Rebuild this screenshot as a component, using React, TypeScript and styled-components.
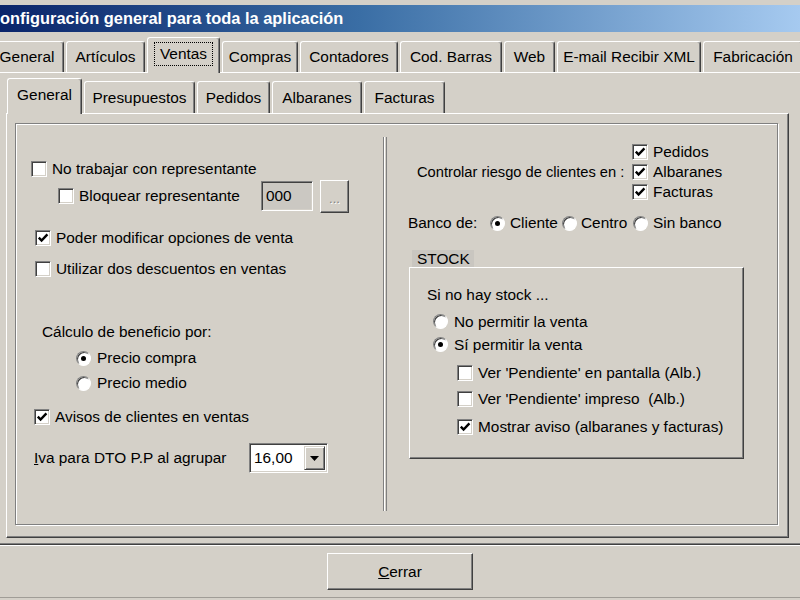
import React from 'react';
import styled, { createGlobalStyle } from 'styled-components';

const Global = createGlobalStyle`
  html, body { margin: 0; padding: 0; background: #d4d0c8; }
  body {
    font-family: "Liberation Sans", Arial, sans-serif;
    font-size: 15.4px;
    color: #000;
  }
  #root { width: 800px; height: 600px; overflow: hidden; }
`;

const Win = styled.div`
  width: 800px;
  height: 600px;
  overflow: hidden;
  background: #d4d0c8;
  display: flex;
  flex-direction: column;
  box-sizing: border-box;
  padding-top: 5px;
`;

const TitleBar = styled.div`
  flex: none;
  height: 27px;
  background: linear-gradient(to right, #0a246a 0%, #3a6ea5 45%, #a6caf0 100%);
  color: #fff;
  font-weight: bold;
  font-size: 16.4px;
  display: flex;
  align-items: center;
  white-space: nowrap;
`;

const TabStrip = styled.div<{ $h: number; $ml: number }>`
  flex: none;
  display: flex;
  align-items: flex-end;
  gap: 2px;
  height: ${(p) => p.$h}px;
  margin-left: ${(p) => p.$ml}px;
  position: relative;
  z-index: 1;
`;

const Tab = styled.div<{ $w: number; $h: number; $active?: boolean }>`
  flex: none;
  box-sizing: border-box;
  width: ${(p) => p.$w}px;
  height: ${(p) => (p.$active ? p.$h + 1 : p.$h)}px;
  margin-bottom: ${(p) => (p.$active ? -1 : 0)}px;
  padding-bottom: ${(p) => (p.$active ? 3 : 0)}px;
  display: flex;
  align-items: center;
  justify-content: center;
  white-space: nowrap;
  background: #d4d0c8;
  border-top: 1px solid #fff;
  border-left: 1px solid #fff;
  border-right: 1px solid #404040;
  box-shadow: inset -1px 0 #808080;
  border-radius: 3px 3px 0 0;
`;

const Focus = styled.span`
  border: 1px dotted #000;
  padding: 1px 5px;
  line-height: 20px;
`;

const MainPanel = styled.div`
  flex: none;
  box-sizing: border-box;
  height: 473px;
  border-top: 1px solid #fff;
  border-bottom: 1px solid #404040;
  box-shadow: inset 0 -1px #808080;
  padding: 5px 11px 0 6px;
  display: flex;
  flex-direction: column;
`;

const SubPanel = styled.div`
  flex: none;
  box-sizing: border-box;
  height: 425px;
  border: 1px solid;
  border-color: #fff #404040 #404040 #fff;
  box-shadow: inset -1px -1px #808080;
  padding: 9px 10px 12px 8px;
  display: flex;
`;

const GroupBox = styled.div`
  flex: 1;
  box-sizing: border-box;
  border: 1px solid #808080;
  box-shadow: inset 1px 1px #fff, 1px 1px #fff;
  display: grid;
  grid-template-columns: 367px 4px 1fr;
`;

const VDivider = styled.div`
  margin: 13px 0;
  box-sizing: border-box;
  border-left: 1px solid #808080;
  border-right: 1px solid #808080;
  background: linear-gradient(to right, #fff 0 1px, #d4d0c8 1px);
`;

const Col = styled.div<{ $pt: number }>`
  display: flex;
  flex-direction: column;
  padding-top: ${(p) => p.$pt}px;
`;

const Row = styled.div<{ $h: number; $mt?: number; $ml?: number }>`
  flex: none;
  display: flex;
  align-items: center;
  height: ${(p) => p.$h}px;
  margin-top: ${(p) => p.$mt ?? 0}px;
  margin-left: ${(p) => p.$ml ?? 0}px;
  white-space: nowrap;
`;

const Item = styled.div<{ $w?: number; $gap?: number }>`
  flex: none;
  display: flex;
  align-items: center;
  gap: ${(p) => p.$gap ?? 5}px;
  width: ${(p) => (p.$w ? `${p.$w}px` : 'auto')};
  white-space: nowrap;
`;

const Text = styled.span<{ $w?: number; $fs?: number }>`
  flex: none;
  width: ${(p) => (p.$w ? `${p.$w}px` : 'auto')};
  font-size: ${(p) => (p.$fs ? `${p.$fs}px` : 'inherit')};
  white-space: nowrap;
`;

const Box = styled.span`
  flex: none;
  box-sizing: border-box;
  width: 16px;
  height: 16px;
  background: #fff;
  border: 1px solid;
  border-color: #808080 #fff #fff #808080;
  box-shadow: inset 1px 1px #404040, inset -1px -1px #d4d0c8;
  display: flex;
  align-items: center;
  justify-content: center;
`;

const RadioCircle = styled.span`
  flex: none;
  box-sizing: border-box;
  width: 15px;
  height: 15px;
  border-radius: 50%;
  background: #fff;
  border: 1px solid;
  border-color: #808080 #fff #fff #808080;
  box-shadow: inset 1px 1px #404040;
  display: flex;
  align-items: center;
  justify-content: center;
`;

const Dot = styled.span`
  width: 5px;
  height: 5px;
  border-radius: 50%;
  background: #000;
`;

const Sunken = styled.div<{ $w: number; $h: number; $bg: string }>`
  flex: none;
  box-sizing: border-box;
  width: ${(p) => p.$w}px;
  height: ${(p) => p.$h}px;
  background: ${(p) => p.$bg};
  border: 1px solid;
  border-color: #808080 #fff #fff #808080;
  box-shadow: inset 1px 1px #404040, inset -1px -1px #d4d0c8;
  display: flex;
  align-items: center;
  padding-left: 4px;
`;

const Raised = styled.div<{ $w: number; $h: number; $ml?: number }>`
  flex: none;
  box-sizing: border-box;
  width: ${(p) => p.$w}px;
  height: ${(p) => p.$h}px;
  margin-left: ${(p) => p.$ml ?? 0}px;
  background: #d4d0c8;
  border: 1px solid;
  border-color: #fff #404040 #404040 #fff;
  box-shadow: inset -1px -1px #808080;
  display: flex;
  align-items: center;
  justify-content: center;
`;

const Dots = styled.span`
  color: #808080;
  text-shadow: 1px 1px #fff;
  font-size: 13px;
  margin-top: 4px;
`;

const Combo = styled.div`
  flex: none;
  box-sizing: border-box;
  width: 79px;
  height: 30px;
  background: #fff;
  border: 1px solid;
  border-color: #808080 #fff #fff #808080;
  box-shadow: inset 1px 1px #404040, inset -1px -1px #d4d0c8;
  display: flex;
  padding: 2px 2px 2px 0;
`;

const ComboValue = styled.span`
  flex: 1;
  display: flex;
  align-items: center;
  padding-left: 4px;
`;

const DropBtn = styled.div`
  flex: none;
  box-sizing: border-box;
  width: 21px;
  background: #d4d0c8;
  border: 1px solid;
  border-color: #d4d0c8 #404040 #404040 #d4d0c8;
  box-shadow: inset 1px 1px #fff, inset -1px -1px #808080;
  display: flex;
  align-items: center;
  justify-content: center;
`;

const Stack = styled.div`
  display: flex;
  flex-direction: column;
`;

const StockGroup = styled.div`
  margin: 15px 0 0 22px;
  width: 335px;
  display: flex;
  flex-direction: column;
`;

const StockLabel = styled.div`
  box-sizing: border-box;
  margin-left: 3px;
  width: 62px;
  height: 17px;
  background: #c9c6c0;
  padding-left: 5px;
  display: flex;
  align-items: center;
`;

const StockBox = styled.div`
  box-sizing: border-box;
  height: 192px;
  border: 1px solid;
  border-color: #fff #404040 #404040 #fff;
  box-shadow: inset -1px -1px #808080;
  padding-top: 15px;
  display: flex;
  flex-direction: column;
`;

const BottomBar = styled.div`
  flex: none;
  box-sizing: border-box;
  height: 53px;
  border-top: 1px solid #fff;
  border-bottom: 1px solid #a09d97;
  display: flex;
  justify-content: center;
  padding-top: 7px;
`;

const CheckMark = () => (
  <svg width="12" height="12" viewBox="0 0 12 12">
    <path d="M1.8 5.6 L4.6 8.6 L10.4 2.4" stroke="#000" strokeWidth="2.4" fill="none" />
  </svg>
);

const Triangle = () => (
  <svg width="9" height="5" viewBox="0 0 9 5">
    <path d="M0 0 H9 L4.5 5 Z" fill="#000" />
  </svg>
);

function Check({ checked, children, w }: { checked?: boolean; children: React.ReactNode; w?: number }) {
  return (
    <Item $w={w}>
      <Box>{checked && <CheckMark />}</Box>
      <Text>{children}</Text>
    </Item>
  );
}

function Radio({ checked, children, w, gap }: { checked?: boolean; children: React.ReactNode; w?: number; gap?: number }) {
  return (
    <Item $w={w} $gap={gap ?? 6}>
      <RadioCircle>{checked && <Dot />}</RadioCircle>
      <Text>{children}</Text>
    </Item>
  );
}

const mainTabs = [
  { label: 'General', w: 74 },
  { label: 'Artículos', w: 79 },
  { label: 'Ventas', w: 73, active: true },
  { label: 'Compras', w: 76 },
  { label: 'Contadores', w: 98 },
  { label: 'Cod. Barras', w: 102 },
  { label: 'Web', w: 51 },
  { label: 'E-mail Recibir XML', w: 144 },
  { label: 'Fabricación', w: 100 },
];

const subTabs = [
  { label: 'General', w: 75, active: true },
  { label: 'Presupuestos', w: 111 },
  { label: 'Pedidos', w: 73 },
  { label: 'Albaranes', w: 90 },
  { label: 'Facturas', w: 81 },
];

export default function App() {
  return (
    <>
      <Global />
      <Win>
        <TitleBar>onfiguración general para toda la aplicación</TitleBar>
        <TabStrip $h={40} $ml={-10}>
          {mainTabs.map((t) => (
            <Tab key={t.label} $w={t.w} $h={t.active ? 35 : 31} $active={t.active}>
              {t.active ? <Focus>{t.label}</Focus> : t.label}
            </Tab>
          ))}
        </TabStrip>
        <MainPanel>
          <TabStrip $h={35} $ml={1}>
            {subTabs.map((t) => (
              <Tab key={t.label} $w={t.w} $h={t.active ? 35 : 32} $active={t.active}>
                {t.label}
              </Tab>
            ))}
          </TabStrip>
          <SubPanel>
            <GroupBox>
              <Col $pt={34}>
                <Row $h={22} $ml={15}>
                  <Check>No trabajar con representante</Check>
                </Row>
                <Row $h={32} $ml={42}>
                  <Check w={203}>Bloquear representante</Check>
                  <Sunken $w={52} $h={30} $bg="#cbc8c2">000</Sunken>
                  <Raised $w={29} $h={33} $ml={7}>
                    <Dots>...</Dots>
                  </Raised>
                </Row>
                <Row $h={24} $mt={14} $ml={19}>
                  <Check checked>Poder modificar opciones de venta</Check>
                </Row>
                <Row $h={24} $mt={7} $ml={19}>
                  <Check>Utilizar dos descuentos en ventas</Check>
                </Row>
                <Row $h={24} $mt={39} $ml={26}>
                  <Text>Cálculo de beneficio por:</Text>
                </Row>
                <Row $h={24} $mt={2} $ml={60}>
                  <Radio checked>Precio compra</Radio>
                </Row>
                <Row $h={24} $mt={1} $ml={60}>
                  <Radio>Precio medio</Radio>
                </Row>
                <Row $h={24} $mt={10} $ml={18}>
                  <Check checked>Avisos de clientes en ventas</Check>
                </Row>
                <Row $h={30} $mt={14} $ml={18}>
                  <Text $w={215}>
                    <u>I</u>va para DTO P.P al agrupar
                  </Text>
                  <Combo>
                    <ComboValue>16,00</ComboValue>
                    <DropBtn>
                      <Triangle />
                    </DropBtn>
                  </Combo>
                </Row>
              </Col>
              <VDivider />
              <Col $pt={18}>
                <Row $h={60} $ml={30}>
                  <Text $w={215} $fs={14.7}>Controlar riesgo de clientes en :</Text>
                  <Stack>
                    <Row $h={20}>
                      <Check checked>Pedidos</Check>
                    </Row>
                    <Row $h={20}>
                      <Check checked>Albaranes</Check>
                    </Row>
                    <Row $h={20}>
                      <Check checked>Facturas</Check>
                    </Row>
                  </Stack>
                </Row>
                <Row $h={24} $mt={9} $ml={21}>
                  <Text $w={82}>Banco de:</Text>
                  <Radio checked w={72} gap={5}>Cliente</Radio>
                  <Radio w={71} gap={4}>Centro</Radio>
                  <Radio gap={5}>Sin banco</Radio>
                </Row>
                <StockGroup>
                  <StockLabel>STOCK</StockLabel>
                  <StockBox>
                    <Row $h={24} $ml={17}>
                      <Text>Si no hay stock ...</Text>
                    </Row>
                    <Row $h={23} $mt={3} $ml={23}>
                      <Radio>No permitir la venta</Radio>
                    </Row>
                    <Row $h={23} $ml={23}>
                      <Radio checked>Sí permitir la venta</Radio>
                    </Row>
                    <Row $h={26} $mt={4} $ml={47}>
                      <Check>Ver 'Pendiente' en pantalla (Alb.)</Check>
                    </Row>
                    <Row $h={26} $ml={47}>
                      <Check>Ver 'Pendiente' impreso &nbsp;(Alb.)</Check>
                    </Row>
                    <Row $h={26} $mt={2} $ml={47}>
                      <Check checked>Mostrar aviso (albaranes y facturas)</Check>
                    </Row>
                  </StockBox>
                </StockGroup>
              </Col>
            </GroupBox>
          </SubPanel>
        </MainPanel>
        <BottomBar>
          <Raised $w={146} $h={37}>
            <span>
              <u>C</u>errar
            </span>
          </Raised>
        </BottomBar>
      </Win>
    </>
  );
}
